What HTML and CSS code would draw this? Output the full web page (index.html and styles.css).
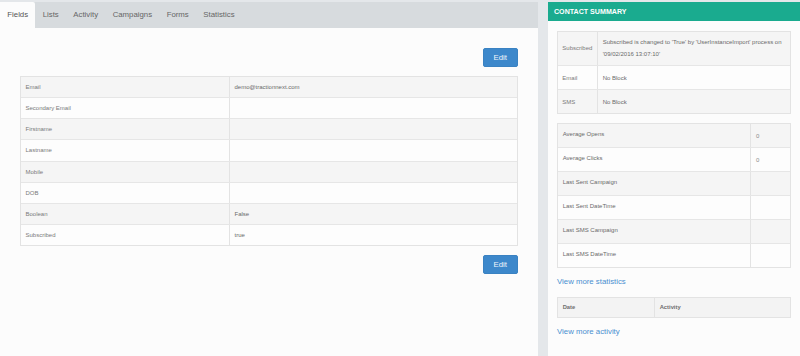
FILE: index.html
```html
<!DOCTYPE html>
<html>
<head>
<meta charset="utf-8">
<link rel="stylesheet" href="styles.css">
</head>
<body>
<div class="page">
  <section class="main">
    <nav class="tabs">
      <span class="tab active">Fields</span>
      <span class="tab">Lists</span>
      <span class="tab">Activity</span>
      <span class="tab">Campaigns</span>
      <span class="tab">Forms</span>
      <span class="tab">Statistics</span>
    </nav>
    <div class="content">
      <div class="actions"><button class="btn">Edit</button></div>
      <div class="ftable">
        <div class="frow odd"><div class="fcell key">Email</div><div class="fcell">demo@tractionnext.com</div></div>
        <div class="frow"><div class="fcell key">Secondary Email</div><div class="fcell"></div></div>
        <div class="frow odd"><div class="fcell key">Firstname</div><div class="fcell"></div></div>
        <div class="frow"><div class="fcell key">Lastname</div><div class="fcell"></div></div>
        <div class="frow odd"><div class="fcell key">Mobile</div><div class="fcell"></div></div>
        <div class="frow"><div class="fcell key">DOB</div><div class="fcell"></div></div>
        <div class="frow odd"><div class="fcell key">Boolean</div><div class="fcell">False</div></div>
        <div class="frow"><div class="fcell key">Subscribed</div><div class="fcell">true</div></div>
      </div>
      <div class="actions bottom"><button class="btn">Edit</button></div>
    </div>
  </section>
  <aside class="side">
    <header class="side-head">CONTACT SUMMARY</header>
    <div class="side-body">
      <div class="stable contact">
        <div class="srow odd tall"><div class="scell key">Subscribed</div><div class="scell multi">Subscribed is changed to 'True' by 'UserInstanceImport' process on '09/02/2016 13:07:10'</div></div>
        <div class="srow h24"><div class="scell key">Email</div><div class="scell">No Block</div></div>
        <div class="srow odd h24b"><div class="scell key">SMS</div><div class="scell">No Block</div></div>
      </div>
      <div class="stable stats">
        <div class="srow odd"><div class="scell">Average Opens</div><div class="scell val">0</div></div>
        <div class="srow"><div class="scell">Average Clicks</div><div class="scell val">0</div></div>
        <div class="srow odd"><div class="scell">Last Sent Campaign</div><div class="scell val"></div></div>
        <div class="srow"><div class="scell">Last Sent DateTime</div><div class="scell val"></div></div>
        <div class="srow odd"><div class="scell">Last SMS Campaign</div><div class="scell val"></div></div>
        <div class="srow"><div class="scell">Last SMS DateTime</div><div class="scell val"></div></div>
      </div>
      <a class="more stats-more">View more statistics</a>
      <div class="stable activity">
        <div class="srow head"><div class="scell">Date</div><div class="scell">Activity</div></div>
      </div>
      <a class="more act-more">View more activity</a>
    </div>
  </aside>
</div>
</body>
</html>
```
FILE: styles.css
```css
* { box-sizing: border-box; }
html, body { margin: 0; height: 100%; }
body {
  background: #e4e7ea;
  font-family: "Liberation Sans", Arial, sans-serif;
  color: #666;
  overflow: hidden;
}
.page {
  display: flex;
  gap: 10px;
  padding-top: 2px;
  height: 356px;
}
.main {
  width: 538px;
  flex: none;
  display: flex;
  flex-direction: column;
  background: #fcfcfc;
}
.tabs {
  display: flex;
  height: 25.5px;
  background: #d7dbde;
}
.tab {
  display: flex;
  align-items: center;
  padding: 0 7.3px;
  font-size: 7.8px;
  color: #666;
}
.tab.active {
  background: #fcfcfc;
  color: #555;
  border-radius: 0 2px 0 0;
}
.content {
  padding: 20px 20px 0 20px;
}
.actions {
  display: flex;
  justify-content: flex-end;
  margin-bottom: 8.6px;
}
.actions.bottom {
  margin: 8.7px 0 0 0;
}
.btn {
  width: 35.5px;
  height: 19.5px;
  background: #3d88cb;
  border: 1px solid #3a82c2;
  border-radius: 2px;
  color: #f2f7fc;
  font-family: "Liberation Sans", Arial, sans-serif;
  font-size: 7.8px;
  padding: 0;
}
.ftable {
  border: 1px solid #e3e3e3;
  width: 498px;
}
.frow {
  display: grid;
  grid-template-columns: 209px 1fr;
  height: 21.2px;
  border-top: 1px solid #e6e6e6;
  background: #fdfdfd;
}
.frow:first-child { border-top: none; height: 20.4px; }
.frow.odd { background: #f5f5f5; }
.fcell {
  display: flex;
  align-items: center;
  padding-left: 4.5px;
  font-size: 6px;
  color: #6a6a6a;
}
.fcell.key {
  border-right: 1px solid #e3e3e3;
  color: #7a7a7a;
}
.side {
  flex: 1;
  background: #fcfcfc;
  display: flex;
  flex-direction: column;
}
.side-head {
  height: 19.3px;
  background: #1aab8f;
  color: #fff;
  font-weight: bold;
  font-size: 7.1px;
  padding-left: 6px;
  display: flex;
  align-items: center;
}
.side-body {
  padding: 9.4px 8.7px 0 9px;
  display: flex;
  flex-direction: column;
}
.stable {
  border: 1px solid #e3e3e3;
}
.srow {
  display: grid;
  height: 24px;
  border-top: 1px solid #e6e6e6;
  background: #fdfdfd;
}
.srow:first-child { border-top: none; }
.srow.odd { background: #f5f5f5; }
.contact .srow { grid-template-columns: 40px 1fr; }
.contact .srow.tall { height: 33.6px; }
.stats { margin-top: 8.6px; }
.stats .srow { grid-template-columns: 1fr 40px; }
.stats .srow:first-child { height: 23px; }
.scell {
  display: flex;
  align-items: center;
  padding-left: 4.7px;
  font-size: 6px;
  color: #6a6a6a;
}
.contact .scell.key {
  border-right: 1px solid #e3e3e3;
  color: #7a7a7a;
  padding-left: 4.3px;
}
.scell.multi {
  line-height: 12.7px;
  padding-right: 6px;
}
.stats .scell { padding-bottom: 2px; }
.stats .scell.val {
  border-left: 1px solid #e3e3e3;
  padding-left: 4.7px;
  padding-bottom: 0;
  padding-top: 1px;
  color: #8a8a8a;
}
.more {
  display: block;
  color: #4a8fd0;
  font-size: 7.8px;
  line-height: 10px;
}
.stats-more { margin: 9.4px 0 0 0; }
.act-more { margin: 9.4px 0 0 0; }
.activity { margin-top: 9.3px; }
.activity .srow {
  grid-template-columns: 97px 1fr;
  height: 19.3px;
  background: #f3f3f3;
}
.activity .scell {
  font-weight: bold;
  color: #6f6f6f;
  font-size: 5.8px;
}
.activity .scell:first-child { border-right: 1px solid #e3e3e3; }
```
